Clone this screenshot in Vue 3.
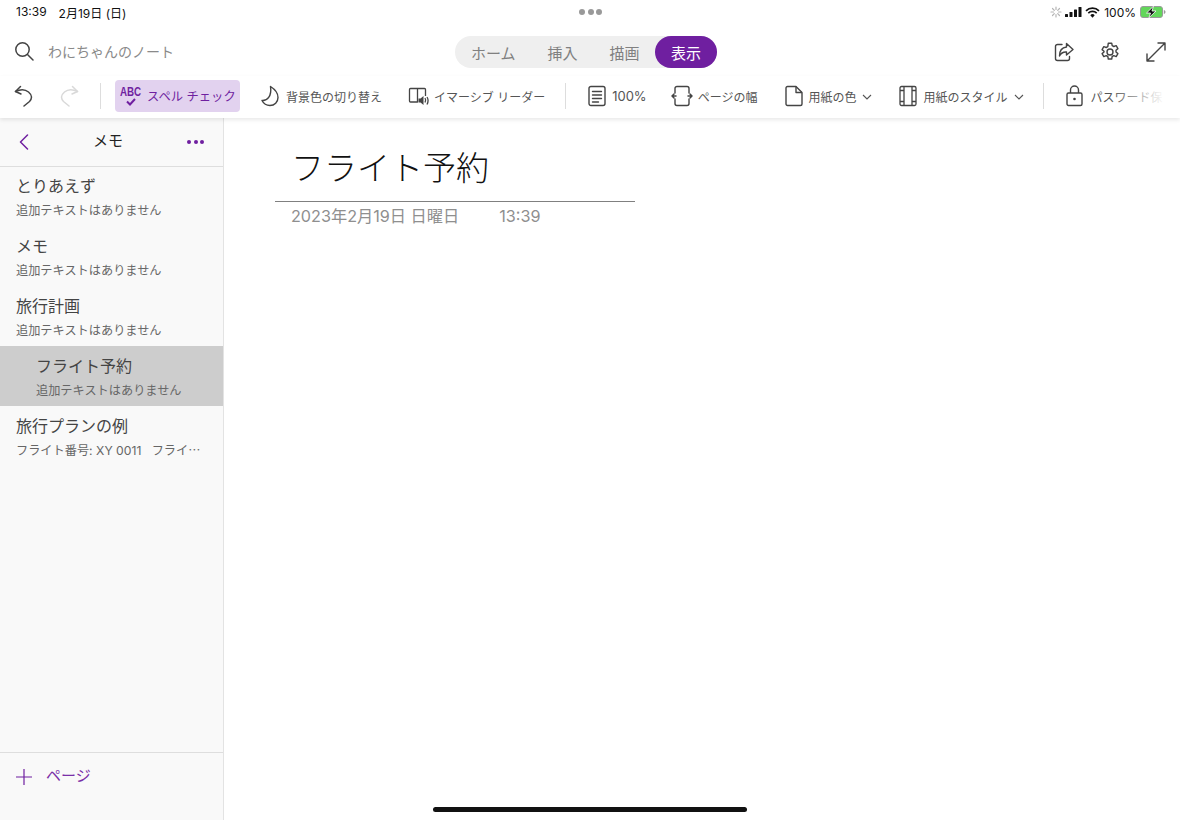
<script setup>
const pages = [
  { title: 'とりあえず', sub: '追加テキストはありません' },
  { title: 'メモ', sub: '追加テキストはありません' },
  { title: '旅行計画', sub: '追加テキストはありません' },
  { title: 'フライト予約', sub: '追加テキストはありません', active: true },
  { title: '旅行プランの例', sub: 'フライト番号: XY 0011   フライ⋯' },
]
</script>

<template>
  <div class="screen">
    <div class="status">
      <div class="status-left"><span>13:39</span><span>2月19日 (日)</span></div>
      <div class="dots"><i></i><i></i><i></i></div>
      <div class="status-right">
        <svg width="12" height="12" viewBox="0 0 12 12" stroke="#b5b5b5" stroke-width="1.2" stroke-linecap="round"><path d="M6 1v2.500M6 8.500V11M1 6h2.500M8.500 6H11M2.500 2.500l1.800 1.800M7.700 7.700l1.800 1.800M2.500 9.500l1.800-1.800M7.700 4.300l1.800-1.800"/></svg>
        <svg width="17" height="10" viewBox="0 0 17 10" fill="#111"><rect x="0" y="7" width="3" height="3" rx=".6"/><rect x="4.500" y="5" width="3" height="5" rx=".6"/><rect x="9" y="2.500" width="3" height="7.500" rx=".6"/><rect x="13.500" y="0" width="3" height="10" rx=".6"/></svg>
        <svg width="15" height="11" viewBox="0 0 15 11" fill="none" stroke="#111" stroke-width="1.700"><path d="M1 3.800a9.200 9.200 0 0 1 13 0M3.300 6.100a6 6 0 0 1 8.400 0"/><path d="M7.500 10.700 5.300 8.300a3 3 0 0 1 4.400 0z" fill="#111" stroke="none"/></svg>
        <span class="pct">100%</span>
        <svg width="26" height="12" viewBox="0 0 26 12"><rect x=".5" y=".5" width="22" height="11" rx="2.500" fill="#62d65a" stroke="#9a9a9a"/><path d="M23.800 4v4c1-.2 1.700-1 1.700-2s-.7-1.800-1.700-2z" fill="#9a9a9a"/><path d="M13.500 0.200 6.500 7h4l-1.600 4.800 7.100-6.800h-4z" fill="#111" stroke="#fff" stroke-width=".8"/></svg>
      </div>
    </div>

    <div class="topbar">
      <div class="search">
        <svg width="20" height="20" viewBox="0 0 20 20" fill="none" stroke="#444" stroke-width="1.500" stroke-linecap="round"><circle cx="8.500" cy="8.500" r="6.700"/><path d="M13.500 13.500 19 19"/></svg>
        <span>わにちゃんのノート</span>
      </div>
      <div class="tabs">
        <span class="tab t1">ホーム</span><span class="tab t2">挿入</span><span class="tab t3">描画</span><span class="tab on">表示</span>
      </div>
      <div class="actions">
        <svg width="20" height="20" viewBox="0 0 20 20" fill="none" stroke="#444" stroke-width="1.400" stroke-linejoin="round" stroke-linecap="round"><path d="M8 2.500H3.500a2 2 0 0 0-2 2v12a2 2 0 0 0 2 2h10a2 2 0 0 0 2-2v-2"/><path d="M12.500 1.500 19 7.500l-6.500 5.500V10c-3.500-.3-5.500 1-7 4 0-5 2.500-8.500 7-9z"/></svg>
        <svg width="20" height="20" viewBox="0 0 20 20" fill="none" stroke="#444" stroke-width="1.400" stroke-linejoin="round"><circle cx="10" cy="10" r="3"/><path d="M8.300 1.200h3.400l.5 2.500 1.600.8 2.400-.9 1.700 3-1.900 1.600v1.800l1.900 1.600-1.700 3-2.400-.9-1.600.8-.5 2.500H8.300l-.5-2.500-1.600-.8-2.400.9-1.700-3 1.900-1.600V9.200L2.100 7.600l1.700-3 2.400.9 1.600-.8z"/></svg>
        <svg width="20" height="20" viewBox="0 0 20 20" fill="none" stroke="#444" stroke-width="1.400" stroke-linecap="round" stroke-linejoin="round"><path d="M12 1h7v7M19 1 1 19M1 12v7h7"/></svg>
      </div>
    </div>

    <div class="ribbon">
      <svg class="undo" width="20" height="22" viewBox="0 0 20 22" fill="none" stroke="#444" stroke-width="1.500" stroke-linecap="round" stroke-linejoin="round"><path d="M6.500 1.500 1.500 6.500l5.500 2.500"/><path d="M1.500 6.500c4-2 9.500-2.500 13 .5s4 6.500 1 9.500L10 21"/></svg>
      <svg class="redo" width="20" height="22" viewBox="0 0 20 22" fill="none" stroke="#d9d9d9" stroke-width="1.500" stroke-linecap="round" stroke-linejoin="round"><path d="M13.500 1.500l5 5-5.500 2.500"/><path d="M18.500 6.500c-4-2-9.500-2.500-13 .5s-4 6.500-1 9.500L10 21"/></svg>
      <div class="sep s1"></div>
      <div class="spell">
        <div class="abc"><b>ABC</b>
          <svg width="10" height="8" viewBox="0 0 10 8" fill="none" stroke="#6f1fa0" stroke-width="2"><path d="M1 3.500l3 3L9 1"/></svg>
        </div>
        <span>スペル チェック</span>
      </div>
      <div class="tool i1">
        <svg width="21" height="22" viewBox="0 0 21 22" fill="none" stroke="#444" stroke-width="1.400" stroke-linejoin="round"><path d="M10.500 1.500c4 2.500 7.500 6 7.500 11 0 4.500-3.500 8-8 8-3.500 0-6.500-2-8-5 5 .5 10-4 8.500-14z"/></svg>
        <span>背景色の切り替え</span>
      </div>
      <div class="tool i2">
        <svg width="22" height="22" viewBox="0 0 22 22" fill="none" stroke="#444" stroke-width="1.300" stroke-linejoin="round"><path d="M9.500 3.500h-7a1 1 0 0 0-1 1v11.500a1 1 0 0 0 1 1h7zM9.500 3.500h7a1 1 0 0 1 1 1v6.500M9.500 17v-13.500"/><path d="M10.500 13.500v4h2l3 2.500v-9l-3 2.500z" fill="#444" stroke="none"/><path d="M17 13c.8 1.200.8 3 0 4.500M19 12c1.300 2 1.300 5 0 7.500"/></svg>
        <span>イマーシブ リーダー</span>
      </div>
      <div class="sep s2"></div>
      <div class="tool i3">
        <svg width="18" height="22" viewBox="0 0 18 22" fill="none" stroke="#444" stroke-width="1.400" stroke-linecap="round"><rect x="1" y="1.500" width="16" height="19" rx="2"/><path d="M4.500 6.500h9M4.500 10h9M4.500 13.500h9M4.500 17h6"/></svg>
        <span class="num">100%</span>
      </div>
      <div class="tool i4">
        <svg width="22" height="22" viewBox="0 0 22 22" fill="none" stroke="#444" stroke-width="1.400" stroke-linecap="round" stroke-linejoin="round"><path d="M4 8V3.500a2 2 0 0 1 2-2h10a2 2 0 0 1 2 2V8M4 14v4.500a2 2 0 0 0 2 2h10a2 2 0 0 0 2-2V14"/><path d="M1 11h4M3 9 1 11l2 2M17 11h4M19 9l2 2-2 2" stroke-width="1.500"/></svg>
        <span>ページの幅</span>
      </div>
      <div class="tool i5">
        <svg width="18" height="22" viewBox="0 0 18 22" fill="none" stroke="#444" stroke-width="1.400" stroke-linejoin="round"><path d="M2.500 1.500h8.500L17 7.500v11.500a1.500 1.500 0 0 1-1.500 1.500h-13A1.500 1.500 0 0 1 1 19V3a1.500 1.500 0 0 1 1.500-1.500z"/><path d="M11 1.500v6h6"/></svg>
        <span>用紙の色</span>
        <svg class="chev" width="10" height="6" viewBox="0 0 10 6" fill="none" stroke="#555" stroke-width="1.100"><path d="M1 1l4 4 4-4"/></svg>
      </div>
      <div class="tool i6">
        <svg width="18" height="22" viewBox="0 0 18 22" fill="none" stroke="#444" stroke-width="1.300"><rect x="1" y="1.500" width="16" height="19" rx="1.500"/><path d="M5 1.500v19M13 1.500v19M1 5.500h4M13 5.500h4M1 16.500h4M13 16.500h4"/></svg>
        <span>用紙のスタイル</span>
        <svg class="chev" width="10" height="6" viewBox="0 0 10 6" fill="none" stroke="#555" stroke-width="1.100"><path d="M1 1l4 4 4-4"/></svg>
      </div>
      <div class="sep s3"></div>
      <div class="tool i7">
        <svg width="17" height="22" viewBox="0 0 17 22" fill="none" stroke="#444" stroke-width="1.400"><rect x="1" y="8" width="15" height="12.500" rx="1.500"/><path d="M4.500 8V5a4 4 0 0 1 8 0v3"/><circle cx="8.500" cy="14" r="1.300" fill="#444" stroke="none"/></svg>
        <span>パスワード保</span>
      </div>
      <div class="fade"></div>
    </div>

    <div class="body">
      <aside class="side">
        <div class="side-head">
          <svg width="10" height="16" viewBox="0 0 10 16" fill="none" stroke="#6f1fa0" stroke-width="1.500" stroke-linecap="round" stroke-linejoin="round"><path d="M8.500 1 1.500 8l7 7"/></svg>
          <span>メモ</span>
          <div class="more"><i></i><i></i><i></i></div>
        </div>
        <div class="list">
          <div v-for="p in pages" :key="p.title" class="row" :class="{ active: p.active }">
            <div class="row-title">{{ p.title }}</div>
            <div class="row-sub">{{ p.sub }}</div>
          </div>
        </div>
        <div class="side-foot">
          <svg width="16" height="16" viewBox="0 0 16 16" stroke="#6f1fa0" stroke-width="1.200"><path d="M8 0v16M0 8h16"/></svg>
          <span>ページ</span>
        </div>
      </aside>
      <main class="page">
        <div class="note-title">フライト予約</div>
        <div class="note-date"><span>2023年2月19日 日曜日</span><span>13:39</span></div>
      </main>
    </div>
    <div class="home"></div>
  </div>
</template>

<style>
html, body { margin: 0; background: #fff; }
</style>

<style scoped>
.screen {
  position: relative;
  width: 1180px;
  height: 820px;
  overflow: hidden;
  background: #fff;
  display: flex;
  flex-direction: column;
  font-family: "Inter", "Noto Sans CJK JP", sans-serif;
  color: #333;
}
.status {
  height: 24px;
  flex: none;
  display: flex;
  align-items: center;
  justify-content: space-between;
  padding: 0 14px 0 16px;
  font-size: 12px;
  color: #111;
  position: relative;
}
.status-left { display: flex; gap: 12px; width: 200px; }
.dots { position: absolute; left: 579px; top: 9px; display: flex; gap: 2.500px; }
.dots i { width: 6px; height: 6px; border-radius: 50%; background: #999; }
.status-right { display: flex; align-items: center; gap: 3px; }
.pct { margin: 0 1px; }
.topbar {
  height: 52px;
  flex: none;
  box-sizing: border-box;
  padding-top: 4px;
  display: flex;
  align-items: center;
  position: relative;
}
.search {
  display: flex;
  align-items: center;
  gap: 14px;
  padding-left: 14px;
  margin-bottom: 2px;
  font-size: 14px;
  color: #8a8a8a;
  width: 441px;
}
.tabs {
  display: flex;
  align-items: center;
  width: 262px;
  height: 32px;
  box-sizing: border-box;
  border-radius: 16px;
  background: #efefef;
  font-size: 15px;
  color: #808080;
}
.tab { display: block; }
.t1 { margin-left: 16px; }
.t2 { margin-left: 32px; }
.t3 { margin-left: 32px; }
.tab.on {
  margin-left: auto;
  width: 62px;
  height: 32px;
  border-radius: 16px;
  background: #6f1fa0;
  color: #fff;
  display: flex;
  align-items: center;
  justify-content: center;
}
.actions { margin-left: auto; padding-right: 14px; display: flex; gap: 26px; }
.ribbon {
  height: 42px;
  flex: none;
  box-sizing: border-box;
  padding-bottom: 2px;
  display: flex;
  align-items: center;
  position: relative;
  z-index: 2;
  font-size: 12px;
  color: #555;
  box-shadow: 0 2px 4px rgba(0, 0, 0, 0.09);
  background: #fff;
  overflow: hidden;
  white-space: nowrap;
}
.undo { margin-left: 14px; flex: none; }
.redo { margin-left: 25px; flex: none; }
.sep { width: 1px; height: 26px; background: #ddd; flex: none; }
.s1 { margin-left: 21px; }
.spell {
  margin-left: 14px;
  width: 125px;
  height: 32px;
  box-sizing: border-box;
  padding-left: 5px;
  border-radius: 4px;
  background: #e2d2ef;
  color: #6f1fa0;
  font-size: 12.300px;
  display: flex;
  align-items: center;
  gap: 6px;
  flex: none;
}
.abc { display: flex; flex-direction: column; align-items: center; width: 21px; line-height: 10px; }
.abc b { font-family: "Liberation Sans", sans-serif; font-size: 12.500px; transform: scaleX(0.78); }
.abc svg { margin-top: 1px; }
.tool { display: flex; align-items: center; flex: none; gap: 6px; }
.tool span { display: block; }
.num { font-size: 13px; }
.i1 { margin-left: 20px; gap: 5px; }
.i2 { margin-left: 26px; gap: 4px; }
.s2 { margin-left: 20px; }
.i3 { margin-left: 22px; gap: 6px; }
.i4 { margin-left: 24px; gap: 5px; }
.i5 { margin-left: 28px; gap: 5px; }
.i6 { margin-left: 27px; gap: 6px; }
.chev { margin: 2px 0 0 1px; }
.s3 { margin-left: 19px; }
.i7 { margin-left: 22px; gap: 7px; }
.fade {
  position: absolute;
  right: 0;
  top: 0;
  bottom: 0;
  width: 70px;
  background: linear-gradient(to right, rgba(255, 255, 255, 0), #fff 78%);
}
.body { flex: 1; display: flex; min-height: 0; }
.side {
  width: 224px;
  flex: none;
  box-sizing: border-box;
  border-right: 1px solid #e3e3e3;
  background: #f9f9f9;
  display: flex;
  flex-direction: column;
}
.side-head {
  height: 48px;
  flex: none;
  box-sizing: border-box;
  box-shadow: 0 1px 0 #dedede;
  display: flex;
  align-items: center;
  position: relative;
  padding: 0 19px;
  font-size: 15px;
  color: #222;
  justify-content: space-between;
}
.side-head span { position: absolute; left: 93px; top: 12px; line-height: 22px; }
.more { display: flex; gap: 2.500px; }
.more i { width: 4px; height: 4px; border-radius: 50%; background: #6f1fa0; }
.list { flex: 1; }
.row {
  height: 60px;
  box-sizing: border-box;
  padding: 8px 0 0 16px;
  overflow: hidden;
}
.row.active { background: #cdcdcd; padding-left: 36px; }
.row-title { font-size: 16px; line-height: 24px; color: #444; }
.row-sub {
  font-size: 12.200px;
  line-height: 16px;
  margin-top: 5px;
  color: #666;
  white-space: pre;
}
.side-foot {
  height: 68px;
  flex: none;
  box-sizing: border-box;
  border-top: 1px solid #dedede;
  display: flex;
  align-items: flex-start;
  padding: 15px 0 0 16px;
  gap: 14px;
  font-size: 15px;
  line-height: 16px;
  color: #7a2fa8;
}
.side-foot svg { margin-top: 1px; }
.page { flex: 1; padding: 19px 0 0 51px; }
.note-title {
  width: 360px;
  box-sizing: border-box;
  height: 65px;
  border-bottom: 1px solid #808080;
  padding-left: 16px;
  font-size: 33px;
  line-height: 62px;
  font-weight: 300;
  color: #111;
}
.note-date {
  display: flex;
  gap: 40px;
  padding: 3px 0 0 16px;
  font-size: 16.200px;
  line-height: 22px;
  color: #8f8f8f;
}
.home {
  position: absolute;
  left: 433px;
  top: 807px;
  width: 314px;
  height: 5px;
  border-radius: 3px;
  background: #111;
}
</style>
